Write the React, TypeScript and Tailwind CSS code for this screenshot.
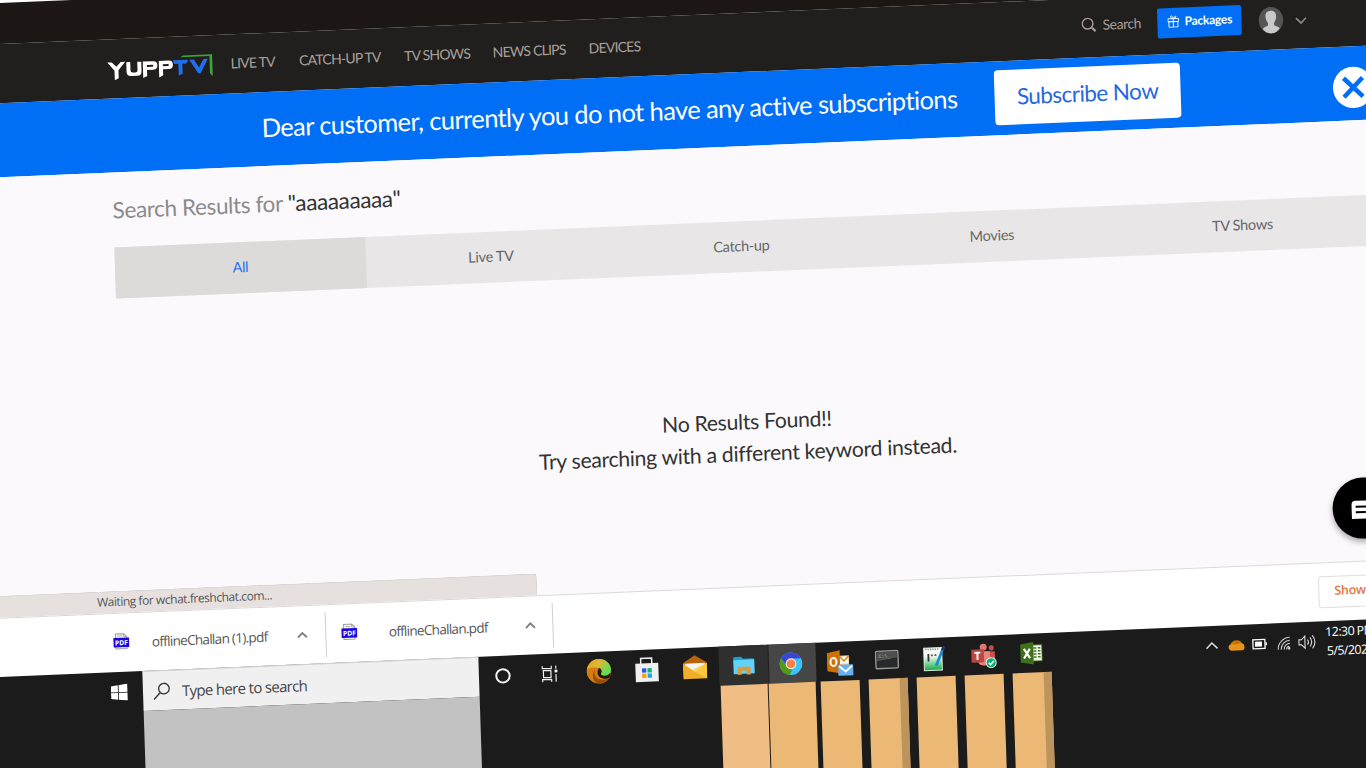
import React from "react";

const Caret = () => (
  <svg className="shrink-0" width="12" height="8" viewBox="0 0 12 8" fill="none">
    <path d="M1.5 6.3 6 1.8l4.5 4.5" stroke="#808080" strokeWidth="1.9" />
  </svg>
);

const PdfIcon = () => (
  <svg className="-mt-[3px] shrink-0" width="16" height="17" viewBox="0 0 16 17">
    <path d="M2.5 4V1h8l3 3v12h-11z" fill="#fff" stroke="#999" />
    <path d="M10.5 1v3h3M4 3.2h5" fill="none" stroke="#999" strokeWidth=".8" />
    <rect x="0" y="5" width="16" height="9.5" rx=".6" fill="#1b05e0" />
    <text x="8" y="12.4" fontSize="6.8" fontWeight="700" fontFamily="Open Sans, sans-serif" fill="#fff" textAnchor="middle">PDF</text>
  </svg>
);

const Logo = () => (
  <svg width="106" height="26" viewBox="0 0 106 26" fill="none">
    <path d="M0 5h4.500L9 9.500 13.500 5H18l-7 8v8l-4 2v-9.500z" fill="#fff" />
    <path d="M19 5.500h4v8.500q0 2 2 2h3q2 0 2-2V5.500h4V15q0 4.500-4.500 4.500h-6Q19 19.500 19 15z" fill="#fff" />
    <path fillRule="evenodd" d="M35.500 5.500H46q4 0 4 4.300T46 14h-6.500v6l-4 2zM39.500 9v2h5.500q1 0 1-1t-1-1z" fill="#fff" />
    <path fillRule="evenodd" d="M51.500 5.500H61.500q4 0 4 4.300t-4 4.200h-6v6l-4 2zM55.500 9v2h5q1 0 1-1t-1-1z" fill="#fff" />
    <path d="M65.500 5.500h15.500l-2 3.700h-4v10l-4 1.800V9.200h-4z" fill="#1f6fef" />
    <path d="m82 5.500 8.500 14h2.500L100.500 5.500h-4.300l-4.700 8.300-4.800-8.300z" fill="#1f6fef" />
    <path d="M73 2.800 76 1h29v22l-2.700-3V2.800z" fill="#3da33b" />
  </svg>
);

const Avatar = () => (
  <svg width="25" height="27" viewBox="0 0 25 27">
    <ellipse cx="12.5" cy="13.5" rx="12.2" ry="13.2" fill="#555" />
    <path d="M12.5 4c4 0 5.6 2.6 5.3 6.4-.3 3-1.300 4.600-2.200 5.600v2.700c1.900 1.200 4.400 1.500 5.400 3.300-2 3-5 4.700-8.500 4.700S6 25 4 22c1-1.800 3.500-2.100 5.400-3.300V16c-.9-1-1.900-2.600-2.200-5.600C6.900 6.600 8.500 4 12.500 4z" fill="#c9c9c9" />
  </svg>
);

const Cortana = () => (
  <svg width="18" height="18" viewBox="0 0 18 18"><circle cx="9" cy="9" r="6.7" fill="none" stroke="#f1f1f1" strokeWidth="2" /></svg>
);
const TaskView = () => (
  <svg width="18" height="18" viewBox="0 0 18 18" fill="none" stroke="#eee" strokeWidth="1.2">
    <path d="M1.500 1v2.500h9V1M1.500 17v-2.500h9V17M2.500 5.500h7.500v7H2.500zM15 1v3M15 9.500V17" />
    <rect x="13.700" y="5" width="2.800" height="2.800" fill="#fff" stroke="none" />
  </svg>
);
const Edge = () => (
  <svg width="26" height="27" viewBox="0 0 26 27">
    <defs>
      <linearGradient id="eg" x1="0" y1="0" x2="1" y2=".6">
        <stop offset="0" stopColor="#f39a1a" /><stop offset=".5" stopColor="#d8bb35" /><stop offset="1" stopColor="#55e05a" />
      </linearGradient>
    </defs>
    <circle cx="13" cy="13.500" r="12.300" fill="#d97c0e" />
    <path d="M1 12C1.500 6 6.500 1.200 13 1.200S25 6 25 12c0 4-3 6-6.500 6-2.500 0-4-.8-3.500-2.200 1.500-2.300.3-5.300-3-5.800C7 9 2.500 9 1 12z" fill="url(#eg)" />
    <path d="M10 11c-3 3-1.500 9 3.500 10.500 4 1.200 7.500 0 10-1.800-3 5.500-9.500 7-13.500 5C6 22 5.500 14.500 10 11z" fill="#965006" />
    <path d="M13.500 10.300c2.500 1 2.600 3.700 1.500 5.500-.5 1.500 1 2.300 3.500 2.300 3 0 4.500-1 6-3 .3 2 0 3.500-1 4.700-3.500 2-8 1.700-10.500-1-2.300-2.500-1.800-6.500.5-8.500z" fill="#1c1b1a" />
  </svg>
);
const Store = () => (
  <svg width="24" height="26" viewBox="0 0 24 26">
    <path d="M6 8V1.500h11V8" fill="none" stroke="#eee" strokeWidth="1.500" />
    <path d="M.5 6.500h23V25H.5z" fill="#f0f0f0" />
    <path d="M7 11.500h4.300v4.300H7z" fill="#2359df" /><path d="M12.500 11.500h4.300v4.300h-4.300z" fill="#0bb873" />
    <path d="M7 16.800h4.300v4.300H7z" fill="#f7a60c" /><path d="M12.500 16.800h4.300v4.300h-4.300z" fill="#16a8f0" />
  </svg>
);
const Mail = () => (
  <svg width="24" height="25" viewBox="0 0 24 25">
    <path d="m0 8 12-7.500L24 8v4H0z" fill="#b86309" /><path d="M2 8.500h20v9H2z" fill="#f4f4f4" />
    <path d="M0 8.500 12 17 24 8.500V24H0z" fill="#f2ae28" /><path d="M24 8.500V24L9 15z" fill="#fbce42" opacity=".8" />
  </svg>
);
const Explorer = () => (
  <svg width="22" height="20" viewBox="0 0 22 20">
    <path d="M.5 1h8l1.500 2h11v4H.5z" fill="#149fd6" /><path d="M.5 4h21v14H.5z" fill="#61d3fb" />
    <path d="M4.500 19v-8h13v8h-4v-4h-5v4z" fill="#dc9a3e" />
  </svg>
);
const Chrome = () => (
  <svg width="24" height="24" viewBox="0 0 24 24">
    <circle cx="12" cy="12" r="11.300" fill="#3bc4fb" />
    <path d="M2.200 6.300A11.300 11.300 0 0 1 22 7H12L7.500 14z" fill="#3b45d5" />
    <path d="M2.200 6.300 8 15l5.500 2-3 6.200A11.300 11.300 0 0 1 2.200 6.300z" fill="#529b16" />
    <circle cx="12" cy="12" r="5.400" fill="#e7e9e6" /><circle cx="12" cy="12" r="4.300" fill="#ff8042" />
  </svg>
);
const Outlook = () => (
  <svg className="mt-[3px]" width="27" height="27" viewBox="0 0 27 27">
    <path d="M12 6h10v12H12z" fill="#f3c48b" /><path d="M13 7h8.500v7H13z" fill="#fff" /><path d="m13 7 4 4.500L21.500 7" stroke="#df7c08" fill="none" strokeWidth="1.400" />
    <path d="M0 3 13 .5v23L0 21z" fill="#ce7106" />
    <ellipse cx="6.500" cy="12" rx="3" ry="4" fill="none" stroke="#fff" strokeWidth="2" />
    <path d="M11 15h15v11H11z" fill="#6bb0ee" /><path d="m12 16.500 6.500 5.500 6.500-5.500" stroke="#fff" strokeWidth="1.800" fill="none" />
  </svg>
);
const Terminal = () => (
  <svg width="24" height="20" viewBox="0 0 24 20">
    <rect x=".8" y="1.200" width="22.400" height="17.400" rx="1" fill="#28292a" stroke="#999" strokeWidth="1.400" />
    <path d="M2 2h20v6l-20 3z" fill="#505050" />
    <text x="3.500" y="8" fontSize="5" fontFamily="Liberation Mono, monospace" fill="#aaa">C:\_</text>
  </svg>
);
const Notepad = () => (
  <svg className="mt-[2px]" width="23" height="26" viewBox="0 0 23 26">
    <defs><linearGradient id="ng" x1="0" y1="0" x2="0" y2="1"><stop offset=".35" stopColor="#f8fbf7" /><stop offset="1" stopColor="#0caf43" /></linearGradient></defs>
    <path d="M1 2h18v22.500H1z" fill="url(#ng)" stroke="#e2ece3" />
    <path d="M2.500 3.500h14" stroke="#888" strokeWidth="1.500" strokeDasharray="1.200 1.200" />
    <path d="M5.500 8v7.500" stroke="#333" strokeWidth="1.800" /><path d="M8 9.500h2M11.500 9.500h2" stroke="#555" strokeWidth="1.800" />
    <path d="m13 20 7-16" stroke="#168ed2" strokeWidth="2.800" /><path d="m19.500 5 1.800-4" stroke="#293461" strokeWidth="3" />
  </svg>
);
const Teams = () => (
  <svg width="26" height="26" viewBox="0 0 26 26">
    <circle cx="12.500" cy="4.500" r="3.500" fill="#e17870" /><circle cx="20.500" cy="5.500" r="2.600" fill="#c54e49" />
    <path d="M16 9h8v9q-1 4-6 3z" fill="#ca504b" /><path d="M7 8.500h12V19c-1 5-11 5-12 0z" fill="#ea837b" />
    <path d="M.5 6.500h12.500v13H.5z" fill="#b94843" />
    <path d="M3.500 9.800h6M6.500 10v7" stroke="#fff" strokeWidth="1.900" />
    <circle cx="20" cy="20.300" r="5" fill="#0cac73" stroke="#e0f1e8" /><path d="m17.500 20.300 1.800 1.900 3.500-3.700" fill="none" stroke="#fff" strokeWidth="1.500" />
  </svg>
);
const Excel = () => (
  <svg className="mr-[2px]" width="23" height="24" viewBox="0 0 23 24">
    <path d="M12 3.500h10v16H12z" fill="#f1f6ec" stroke="#4b7b20" strokeWidth=".8" />
    <path d="M13.500 6.500h3M18 6.500h2.500M13.500 9.500h3M18 9.500h2.500M13.500 12.500h3M18 12.500h2.500M13.500 15.500h3M18 15.500h2.500" stroke="#477620" strokeWidth="1.500" />
    <path d="M.5 2.500 13.500.5v22.500L.5 20.500z" fill="#3f701d" /><path d="m4 7 6 9.500M10 7l-6 9.500" stroke="#fff" strokeWidth="2.200" />
  </svg>
);

const apps: { icon: React.ReactNode; cell: string }[] = [
  { icon: <Cortana />, cell: "" },
  { icon: <TaskView />, cell: "pr-[3px]" },
  { icon: <Edge />, cell: "" },
  { icon: <Store />, cell: "" },
  { icon: <Mail />, cell: "" },
  { icon: <Explorer />, cell: "bg-[#2f2f2f]" },
  { icon: <Chrome />, cell: "bg-[#464646] border-l border-[#1c1c1c] pr-[2px]" },
  { icon: <Outlook />, cell: "pl-[2px]" },
  { icon: <Terminal />, cell: "pr-[2px]" },
  { icon: <Notepad />, cell: "pr-[2px]" },
  { icon: <Teams />, cell: "pl-px" },
  { icon: <Excel />, cell: "" },
];

const nav = [
  { label: "LIVE TV", box: "w-[68.500px]" },
  { label: "CATCH-UP TV", box: "w-[105px]" },
  { label: "TV SHOWS", box: "w-[88.500px]" },
  { label: "NEWS CLIPS", box: "w-[96px]" },
  { label: "DEVICES", box: "w-[60px]" },
];

function Header() {
  return (
    <>
      <div className="h-[41px] bg-[#1c1714]" />
      <header className="flex h-[58.600px] bg-[#201f1d] pl-[145px] font-[Lato,sans-serif]">
        <div className="mt-[18px] w-[123.200px] shrink-0"><Logo /></div>
        <nav className="flex h-[56px] w-[851px] shrink-0 items-center text-[14px] tracking-[-0.780px] text-[#aaa19a]">
          {nav.map((n) => <span key={n.label} className={`${n.box} shrink-0 whitespace-nowrap`}>{n.label}</span>)}
        </nav>
        <div className="flex h-[53px] w-[76px] shrink-0 items-center text-[14px] text-[#a79d98]">
          <svg className="mr-[6px] shrink-0" width="15" height="15" viewBox="0 0 15 15" fill="none" stroke="currentColor"><circle cx="6.300" cy="6.300" r="5.300" strokeWidth="1.400" /><path d="m10.500 10.500 3.500 3.500" strokeWidth="2.200" /></svg>
          <span className="-mt-px tracking-[-0.450px]">Search</span>
        </div>
        <button className="mt-[12.500px] flex h-[30.500px] w-[84px] shrink-0 items-center rounded-[2px] bg-[#006ef5] pb-[2px] pl-[10px] text-[12px] font-bold tracking-[-0.250px] text-white">
          <svg className="mr-[5px] shrink-0" width="12" height="13" viewBox="0 0 12 13" fill="none" stroke="#fff"><path d="M.7 3.800h10.600v3H.7zM1.500 6.800h9v5.500h-9zM6 3.800v8.500M6 3.500C4 3.500 2.800 2.500 3.400 1.400S6 1.600 6 3.500s2-3.200 2.600-2.100S8 3.500 6 3.500" strokeWidth=".9" /></svg>
          Packages
        </button>
        <div className="mt-[16px] ml-[17px] shrink-0"><Avatar /></div>
        <svg className="mt-[27px] ml-[11px] shrink-0" width="13" height="9" viewBox="0 0 13 9" fill="none"><path d="m1.500 1.500 5 5 5-5" stroke="#8d8583" strokeWidth="1.700" /></svg>
      </header>
    </>
  );
}

function Banner() {
  return (
    <div className="flex h-[74.600px] items-start bg-[#006ef5] pl-[297px] font-[Lato,sans-serif]">
      <p className="w-[733px] shrink-0 pt-[17.500px] text-[25.500px] leading-[36px] tracking-[-0.600px] whitespace-nowrap text-white">Dear customer, currently you do not have any active subscriptions</p>
      <button className="mt-[9.500px] h-[54.500px] w-[186px] shrink-0 rounded-[4px] bg-white text-[22.500px] tracking-[-0.550px] text-[#2568dd]">Subscribe Now</button>
      <svg className="mt-[20px] ml-[151.500px] shrink-0" width="41" height="42" viewBox="0 0 41 42"><ellipse cx="20.500" cy="21" rx="20.300" ry="20.700" fill="#fff" /><path d="M11 11.500 30 30.500M30 11.500 11 30.500" stroke="#006ef5" strokeWidth="4.500" /></svg>
    </div>
  );
}

function Results() {
  const tabs = ["All", "Live TV", "Catch-up", "Movies", "TV Shows"];
  return (
    <main className="h-[440px] bg-[#fbf9fb] font-[Lato,sans-serif]">
      <div className="flex h-[417.500px]">
        <div className="w-[1354px] shrink-0">
          <h1 className="pt-[23px] pl-[145.500px] text-[22.500px] leading-[30px] tracking-[-0.370px] text-[#8b8b8b]">Search Results for <span className="text-[#333]">"aaaaaaaaa"</span></h1>
          <div className="mt-[22px] ml-[146px] flex h-[51px] w-[1255px] bg-[#e8e6e6] text-[14.500px] tracking-[-0.300px] text-[#666]">
            {tabs.map((t, i) => (
              <div key={t} className={`flex w-[250.500px] items-center justify-center pb-px ${i === 0 ? "bg-[#dddbd9] text-[#1f74f2]" : ""}`}>{t}</div>
            ))}
          </div>
          <div className="mt-[133px] ml-[146px] w-[1252px] text-center text-[21.200px] leading-[32px] tracking-[-0.310px] text-[#333]">
            <p>No Results Found!!</p>
            <p>Try searching with a different keyword instead.</p>
          </div>
        </div>
        <div className="mt-[357px] flex size-[61px] shrink-0 items-center justify-center rounded-full bg-black shadow-[0_3px_6px_rgba(0,0,0,0.35)]">
          <svg className="mt-[2px] mr-[2px]" width="24" height="20" viewBox="0 0 24 20"><path d="M5 1h16q2 0 2 2v16H1V5q0-4 4-4z" fill="#fff" /><path d="M5 7h14M5 12.500h10" stroke="#000" strokeWidth="2" /></svg>
        </div>
      </div>
      <div className="flex h-[22.500px] w-[556.500px] items-center rounded-tr-[4px] border-t border-r border-[#d7d3d2] bg-[#e6e1de] pl-[117px] font-['Open_Sans',sans-serif] text-[12px] tracking-[-0.450px] text-[#555]">Waiting for wchat.freshchat.com...</div>
    </main>
  );
}

function Downloads() {
  return (
    <div className="flex h-[59px] items-center border-t border-[#dcd8da] bg-white pl-[132px] font-['Open_Sans',sans-serif] text-[13.500px] text-[#555]">
      <PdfIcon />
      <span className="ml-[22.500px] w-[144px] shrink-0 tracking-[-0.680px] whitespace-nowrap">offlineChallan (1).pdf</span>
      <Caret />
      <div className="ml-[17px] h-[45px] w-px bg-[#cfcfcf]" />
      <div className="ml-[15px]"><PdfIcon /></div>
      <span className="ml-[32px] w-[135px] shrink-0 tracking-[-0.700px] whitespace-nowrap">offlineChallan.pdf</span>
      <Caret />
      <div className="ml-[16.500px] h-[45px] w-px bg-[#cfcfcf]" />
      <div className="ml-[765px] flex h-[32px] w-[90px] shrink-0 items-center rounded-[4px] border border-[#dedede] pb-px pl-[15px] text-[12.500px] font-semibold tracking-[-0.300px] whitespace-nowrap text-[#e6763d]">Show all</div>
    </div>
  );
}

function Tray() {
  return (
    <div className="flex items-center pl-[149px] font-['Open_Sans',sans-serif] text-white">
      <svg className="mr-[8.500px]" width="14" height="9" viewBox="0 0 14 9" fill="none"><path d="m1.500 7.500 5.500-5.500 5.500 5.500" stroke="#ddd" strokeWidth="1.500" /></svg>
      <svg className="mr-[7px]" width="17" height="12" viewBox="0 0 17 12"><path d="M2.500 7C2 4 5 1 8.500 1.200S14 3 14.500 5.500z" fill="#c67405" /><path d="M3.500 11.500Q.5 11 .5 8t4-3.300l3 1 5-1.200q4-.3 4 4 0 3-3 3z" fill="#e8931b" /></svg>
      <svg className="mr-[9px]" width="16" height="12" viewBox="0 0 16 12"><path d="M1 1.500h12v9H1z" fill="none" stroke="#fff" strokeWidth="1.300" /><path d="M3 3.500h7v5H3zM13.500 4.500H15v3h-1.500z" fill="#fff" /></svg>
      <svg className="mr-[7px]" width="14" height="14" viewBox="0 0 14 14" fill="none" stroke="#ccc" strokeWidth="1.100"><path d="M1 13.500A12 12 0 0 1 13 1.500M4 13.500a9 9 0 0 1 9-9M7 13.500a6 6 0 0 1 6-6M9.500 13.500a3 3 0 0 1 3-3" /><circle cx="12" cy="12.500" r=".8" fill="#fff" /></svg>
      <svg className="mr-[10px]" width="18" height="16" viewBox="0 0 18 16" fill="none" stroke="#ddd" strokeWidth="1.100"><path d="M1 5.500h2.500L7 2v12l-3.500-3.500H1zM9.500 5.500q2 2.500 0 5M12 3.500q3.500 4.500 0 9M14.500 1.500q5 6.500 0 13" /></svg>
      <div className="w-[70px] shrink-0 text-[12.500px] leading-[19px] tracking-[-0.600px] whitespace-nowrap"><div>12:30 PM</div><div className="pl-[1px]">5/5/2021</div></div>
    </div>
  );
}

function Taskbar() {
  return (
    <div className="h-[170px] bg-[#1b1b1b]">
      <div className="flex h-[39px]">
        <div className="flex w-[160px] shrink-0 items-center justify-end pt-px pr-[15px]">
          <svg width="17" height="17" viewBox="0 0 17 17" fill="#fff"><path d="m0 2.300 7-1v6.900H0zM7.800 1.200 16.500 0v8.200H7.800zM0 9h7v6.700l-7-1zM7.800 9h8.700v8l-8.700-1.200z" /></svg>
        </div>
        <div className="-mb-px flex w-[336px] shrink-0 items-center border-t border-[#cfcfcf] bg-[#f0f0f0] pt-px pl-[10px] font-['Open_Sans',sans-serif] text-[15px] tracking-[-0.680px] text-[#444]">
          <svg className="mr-[11px]" width="18" height="18" viewBox="0 0 18 18" fill="none" stroke="#333" strokeWidth="1.300"><circle cx="11" cy="6.500" r="5.300" /><path d="M7 10.500.8 17" /></svg>
          <span className="pt-px">Type here to search</span>
        </div>
        <div className="flex w-[577px] shrink-0">
          {apps.map((a, i) => <div key={i} className={`flex w-[48.100px] shrink-0 items-center justify-center ${a.cell}`}>{a.icon}</div>)}
        </div>
        <Tray />
      </div>
      <div className="flex h-[131px] pl-[160px]">
        <div className="mt-px mr-[241px] w-[336px] shrink-0 bg-[#c2c2c2]" />
        <div className="mr-px w-[47px] bg-[#f0be84]" />
        <div className="mr-[4.500px] w-[47px] bg-[#ecb876]" />
        <div className="mr-[8.500px] w-[39.500px] bg-[#ecb876]" />
        <div className="mr-[8.500px] w-[39.500px] border-r-[8.500px] border-[#bd945d] bg-[#ecb876]" />
        <div className="mr-[8.500px] w-[39.500px] bg-[#ecb876]" />
        <div className="mr-[8.500px] w-[39.500px] bg-[#ecb876]" />
        <div className="w-[39.500px] border-r-[8.500px] border-[#bd945d] bg-[#ecb876]" />
      </div>
    </div>
  );
}

export default function App() {
  return (
    <div className="h-[768px] w-[1366px] overflow-hidden bg-white">
      <div className="w-[1460px] origin-top-left pt-[3px] [transform:matrix(1,-0.042,0.033,1,-40,1.68)]">
        <Header />
        <Banner />
        <Results />
        <Downloads />
        <Taskbar />
      </div>
    </div>
  );
}
